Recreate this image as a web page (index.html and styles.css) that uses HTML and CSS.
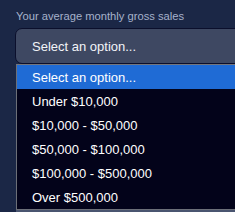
FILE: index.html
```html
<!DOCTYPE html>
<html lang="en">
<head>
    <meta charset="UTF-8">
    <meta name="viewport" content="width=device-width, initial-scale=1.0">
    <title>Sales field</title>
    <link rel="stylesheet" href="styles.css">
</head>
<body class="body">
    <div class="field">
        <div class="field-label">Your average monthly gross sales</div>
        <div class="select-box">Select an option...</div>
        <div class="options">
            <div class="option active">Select an option...</div>
            <div class="option">Under $10,000</div>
            <div class="option">$10,000 - $50,000</div>
            <div class="option">$50,000 - $100,000</div>
            <div class="option">$100,000 - $500,000</div>
            <div class="option">Over $500,000</div>
        </div>
        <div class="below"></div>
    </div>
</body>
</html>
```

FILE: styles.css
```css
.body {
    margin: 0;
    padding: 0;
    height: 100vh;
    overflow: hidden;
    background-color: #1b2746;
    font-family: "Liberation Sans", Arial, sans-serif;
}

.field {
    padding: 8px 0 0 15px;
    width: 300px;
}

.field-label {
    color: #a6b2cb;
    font-size: 11.2px;
    line-height: 16px;
    padding-left: 1px;
    margin-bottom: 4px;
}

.select-box {
    box-sizing: border-box;
    height: 36px;
    padding: 0 16px;
    display: flex;
    align-items: center;
    background-color: #3e4862;
    border: 1px solid #0b0f2c;
    border-radius: 7px;
    color: #f2f4f8;
    font-size: 13px;
}

.options {
    margin-left: 1px;
    border: 1px solid #6c6f78;
    border-top-color: #74767d;
    background-color: #03031a;
}

.option {
    height: 24px;
    display: flex;
    align-items: center;
    padding-left: 15px;
    color: #ffffff;
    font-size: 13px;
}

.option.active {
    background-color: #1f6bd5;
}

.below {
    height: 10px;
    margin-left: 1px;
    background-color: #4a5570;
}
```
